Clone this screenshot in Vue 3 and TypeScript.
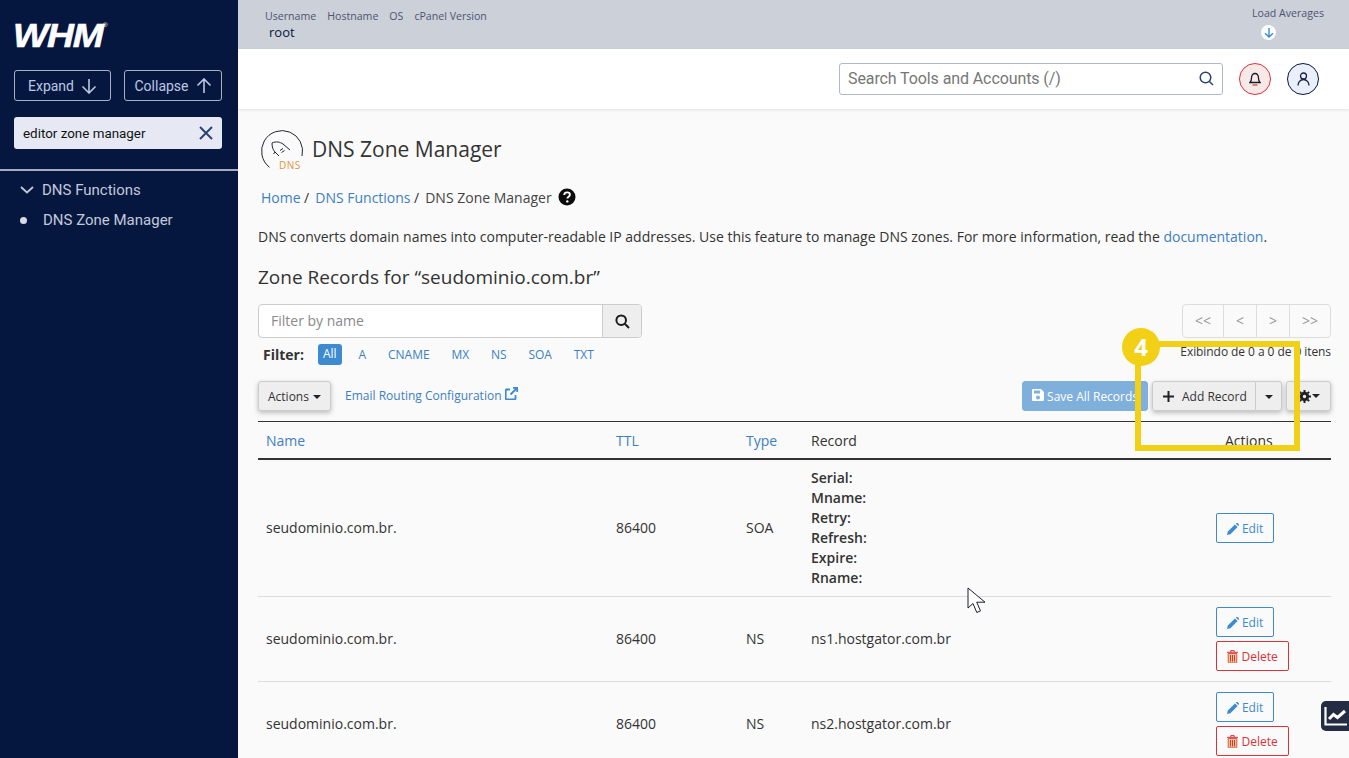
<script setup lang="ts">
interface ZoneRow {
  name: string;
  ttl: string;
  type: string;
  record: string[];
  canDelete: boolean;
}

const filterTypes = ["All", "A", "CNAME", "MX", "NS", "SOA", "TXT"];
const soaFields = ["Serial:", "Mname:", "Retry:", "Refresh:", "Expire:", "Rname:"];

const rows: ZoneRow[] = [
  { name: "seudominio.com.br.", ttl: "86400", type: "SOA", record: [], canDelete: false },
  { name: "seudominio.com.br.", ttl: "86400", type: "NS", record: ["ns1.hostgator.com.br"], canDelete: true },
  { name: "seudominio.com.br.", ttl: "86400", type: "NS", record: ["ns2.hostgator.com.br"], canDelete: true },
];
</script>

<template>
  <div class="shell">
    <aside class="sidebar">
      <div class="logo">WHM<sup>®</sup></div>
      <div class="side-buttons">
        <button class="side-btn">
          Expand
          <svg width="16" height="16" viewBox="0 0 16 16" fill="none" stroke="currentColor" stroke-width="1.6">
            <path d="M8 1v14M1.5 8.5 8 15l6.500-6.500" />
          </svg>
        </button>
        <button class="side-btn">
          Collapse
          <svg width="16" height="16" viewBox="0 0 16 16" fill="none" stroke="currentColor" stroke-width="1.6">
            <path d="M8 15V1M1.500 7.500 8 1l6.500 6.500" />
          </svg>
        </button>
      </div>
      <div class="side-search">
        <span>editor zone manager</span>
        <svg width="14" height="14" viewBox="0 0 14 14" fill="none" stroke="#2c4370" stroke-width="2">
          <path d="M1 1l12 12M13 1 1 13" />
        </svg>
      </div>
      <hr class="side-rule" />
      <div class="side-group">
        <svg width="14" height="8" viewBox="0 0 14 8" fill="none" stroke="currentColor" stroke-width="1.800">
          <path d="M1 1l6 5.500L13 1" />
        </svg>
        DNS Functions
      </div>
      <div class="side-item"><i class="dot"></i>DNS Zone Manager</div>
    </aside>

    <div class="main">
      <div class="topbar">
        <div>
          <div class="top-labels">
            <span>Username</span><span>Hostname</span><span>OS</span><span>cPanel Version</span>
          </div>
          <div class="top-user">root</div>
        </div>
        <div class="load">
          <div>Load Averages</div>
          <span class="load-arrow">
            <svg width="10" height="10" viewBox="0 0 10 10" fill="none" stroke="#3a8ad6" stroke-width="1.400">
              <path d="M5 0v9M1 5.200 5 9l4-3.800" />
            </svg>
          </span>
        </div>
      </div>

      <header class="header">
        <div class="search">
          <span>Search Tools and Accounts (/)</span>
          <svg width="15" height="15" viewBox="0 0 15 15" fill="none" stroke="#2c4370" stroke-width="1.500">
            <circle cx="6.500" cy="6.500" r="5.300" />
            <path d="M10.500 10.500 14 14" />
          </svg>
        </div>
        <div class="round bell">
          <svg width="12" height="14" viewBox="0 0 12 14" fill="none" stroke="#141b33" stroke-width="1.300">
            <path d="M1 10.500h10c-1.200-1.200-1.500-2.500-1.500-4.500C9.500 3 8 1.500 6 1.500S2.500 3 2.500 6c0 2-.3 3.300-1.500 4.500Z" />
            <path d="M3.500 13h5" stroke="#c2552d" />
          </svg>
        </div>
        <div class="round user">
          <svg width="13" height="14" viewBox="0 0 13 14" fill="none" stroke="#1a2340" stroke-width="1.300">
            <circle cx="6.500" cy="4" r="3" />
            <path d="M1 13.500c0-3 2.200-6 5.500-6s5.500 3 5.500 6" />
          </svg>
        </div>
      </header>

      <main class="content">
        <div class="title-row">
          <svg class="dns-icon" width="44" height="44" viewBox="0 0 44 44" fill="none">
            <path d="M9.500 38.300A20.500 20.500 0 1 1 42 27" stroke="#20242e" stroke-width="1" />
            <path d="M12 14c4-2 8-1 11 1l7 6M12 14c0 4 1 7 3 9l4 4M15 23l-1.500 2M20 21.500l3-2M21.500 23.500l3-2" stroke="#20242e" stroke-width="1" />
            <text x="19" y="39.500" class="dns-label">DNS</text>
          </svg>
          <h1>DNS Zone Manager</h1>
        </div>

        <nav class="crumbs">
          <a>Home</a><span class="sep">/</span><a>DNS Functions</a><span class="sep">/</span>
          <span class="current">DNS Zone Manager</span>
          <svg width="18" height="18" viewBox="0 0 18 18">
            <circle cx="9" cy="9" r="8.500" fill="#0c0c0c" />
            <path d="M6.200 7c.1-1.700 1.300-2.600 2.900-2.600s2.800 1 2.800 2.300c0 2-2.500 2-2.500 3.700" fill="none" stroke="#fff" stroke-width="1.900" />
            <circle cx="9.300" cy="13.400" r="1.200" fill="#fff" />
          </svg>
        </nav>

        <p class="intro">
          DNS converts domain names into computer-readable IP addresses. Use this feature to manage DNS zones. For more information, read the <a>documentation</a>.
        </p>

        <h2>Zone Records for “seudominio.com.br”</h2>

        <div class="filter-area">
          <div>
            <div class="filter-input">
              <span class="filter-text">Filter by name</span>
              <span class="filter-btn">
                <svg width="15" height="15" viewBox="0 0 15 15" fill="none" stroke="#1c1c1c" stroke-width="2">
                  <circle cx="6.200" cy="6.200" r="4.800" />
                  <path d="M9.800 9.800 14 14" />
                </svg>
              </span>
            </div>
            <div class="type-filter">
              <b>Filter:</b>
              <span v-for="t in filterTypes" :key="t" class="chip" :class="{ active: t === 'All' }">{{ t }}</span>
            </div>
          </div>
          <div class="paging">
            <div class="pager">
              <span>&lt;&lt;</span><span>&lt;</span><span>&gt;</span><span>&gt;&gt;</span>
            </div>
            <div class="paging-text">Exibindo de 0 a 0 de 0 itens</div>
          </div>
        </div>

        <div class="toolbar">
          <button class="btn raised">Actions <i class="caret"></i></button>
          <a class="email-link">
            Email Routing Configuration
            <svg width="13" height="13" viewBox="0 0 13 13" fill="none" stroke="#3d8ad0" stroke-width="1.800">
              <path d="M10.500 8v3.500a.8.8 0 0 1-.8.8H1.500a.8.8 0 0 1-.8-.8V3.300a.8.8 0 0 1 .8-.8H5" />
              <path d="M5.500 7.500 12 1M8 .800h4.200V5" />
            </svg>
          </a>
          <div class="toolbar-right">
            <button class="btn save">
              <svg width="12" height="12" viewBox="0 0 12 12">
                <path fill="#fff" fill-rule="evenodd" d="M1 0h8l3 3v8a1 1 0 0 1-1 1H1a1 1 0 0 1-1-1V1a1 1 0 0 1 1-1Zm1 1.500V4.500h6V1.500H2ZM6 6.500a2 2 0 1 0 0 4 2 2 0 0 0 0-4Z" />
              </svg>
              Save All Records
            </button>
            <div class="split raised">
              <button class="btn add">
                <svg width="11" height="11" viewBox="0 0 11 11" fill="none" stroke="#222" stroke-width="2">
                  <path d="M5.500 0v11M0 5.500h11" />
                </svg>
                Add Record
              </button>
              <button class="btn add-caret"><i class="caret"></i></button>
            </div>
            <button class="btn raised gear">
              <svg width="13" height="13" viewBox="0 0 13 13" fill="none" stroke="#222" stroke-width="3">
                <circle cx="6.500" cy="6.500" r="3.200" />
                <path stroke-width="2" d="M6.500 0v2M6.500 11v2M0 6.500h2M11 6.500h2M1.900 1.900l1.400 1.400M9.700 9.700l1.400 1.400M1.900 11.100l1.400-1.400M9.700 3.300l1.400-1.400" />
              </svg>
              <i class="caret"></i>
            </button>
          </div>
        </div>

        <table class="records">
          <colgroup>
            <col style="width: 350px" /><col style="width: 130px" /><col style="width: 65px" /><col style="width: 405px" /><col style="width: 123px" />
          </colgroup>
          <thead>
            <tr>
              <th><a>Name</a></th>
              <th><a>TTL</a></th>
              <th><a>Type</a></th>
              <th>Record</th>
              <th class="actions-head">Actions</th>
            </tr>
          </thead>
          <tbody>
            <tr v-for="(row, i) in rows" :key="i">
              <td>{{ row.name }}</td>
              <td>{{ row.ttl }}</td>
              <td>{{ row.type }}</td>
              <td :class="{ 'soa-cell': row.type === 'SOA' }">
                <template v-if="row.type === 'SOA'">
                  <div v-for="f in soaFields" :key="f" class="soa-line">{{ f }}</div>
                </template>
                <template v-else>{{ row.record[0] }}</template>
              </td>
              <td class="row-actions">
                <button class="row-btn edit">
                  <svg width="12" height="12" viewBox="0 0 12 12" fill="#3d8ad0">
                    <path d="M0 12l.8-3.400L8 1.400 10.600 4 3.400 11.200 0 12ZM8.800.6l.6-.5a.9.900 0 0 1 1.200 0l1.200 1.200a.9.900 0 0 1 0 1.200l-.5.6L8.800.6Z" />
                  </svg>
                  Edit
                </button>
                <button v-if="row.canDelete" class="row-btn del">
                  <svg width="11" height="13" viewBox="0 0 11 13">
                    <path d="M1.200 3.500h8.600V12a1 1 0 0 1-1 1H2.200a1 1 0 0 1-1-1V3.500Z" fill="#e8c98a" stroke="#d6333b" stroke-width="0.800" />
                    <path d="M3.500 5v6.500M5.500 5v6.500M7.500 5v6.500M0 2.300h11M3.800 2V.6h3.400V2" fill="none" stroke="#d6333b" stroke-width="1" />
                  </svg>
                  Delete
                </button>
              </td>
            </tr>
          </tbody>
        </table>
      </main>
    </div>

    <div class="callout-box"></div>
    <div class="callout-badge">4</div>

    <svg class="pointer" width="20" height="28" viewBox="0 0 20 28">
      <path d="M1 1v20l5-4.500 3.800 9 3.700-1.600-3.800-8.700H18L1 1Z" fill="#fff" stroke="#1b1f2e" stroke-width="1" />
    </svg>

    <div class="chart-tab">
      <svg width="23" height="21" viewBox="0 0 23 21" fill="none" stroke="#fff" stroke-width="2.200">
        <path d="M1.500 1v17.500H23" />
        <path d="M5 13l4.500-4.500 4 3L21 5" stroke-width="3" />
      </svg>
    </div>
  </div>
</template>

<style>
html,
body {
  margin: 0;
  height: 758px;
  overflow: hidden;
}
</style>

<style scoped>
.shell {
  position: relative;
  display: grid;
  grid-template-columns: 238px 1fr;
  height: 758px;
  overflow: hidden;
  font-family: "Open Sans", sans-serif;
  font-size: 14px;
  color: #333;
  background: #fafafa;
}

.sidebar {
  background: #06173f;
  color: #c3c9dc;
  font-family: Roboto, sans-serif;
}

.logo {
  height: 25px;
  margin: 22px 0 0 13px;
  color: #fff;
  font-family: "Liberation Sans", sans-serif;
  font-size: 33px;
  line-height: 27px;
  font-style: italic;
  font-weight: 700;
  letter-spacing: -1px;
  -webkit-text-stroke: 0.6px #fff;
  transform: scaleX(1.13);
  transform-origin: left;
}

.logo sup {
  font-size: 6px;
  line-height: 0;
  vertical-align: 20px;
  font-style: normal;
  font-weight: 400;
  letter-spacing: 0;
  -webkit-text-stroke: 0;
}

.side-buttons {
  display: flex;
  gap: 13px;
  margin: 23px 16px 0 14px;
}

.side-btn {
  width: 97px;
  height: 31px;
  display: flex;
  align-items: center;
  justify-content: center;
  gap: 7px;
  padding: 0;
  border: 1px solid #a9b0c6;
  border-radius: 3px;
  background: none;
  color: #bcc7e2;
  font-family: Roboto, sans-serif;
  font-size: 14px;
}

.side-btn + .side-btn {
  width: 98px;
}

.side-search {
  display: flex;
  align-items: center;
  justify-content: space-between;
  height: 32px;
  margin: 16px 16px 0 14px;
  padding: 0 9px;
  border-radius: 3px;
  background: #e6e9f3;
  color: #111;
  font-size: 13.4px;
}

.side-rule {
  margin: 20px 0 0;
  border: 0;
  height: 2px;
  background: #a5abbf;
}

.side-group {
  display: flex;
  align-items: center;
  gap: 8px;
  margin: 9px 0 0 20px;
  height: 20px;
  font-size: 15px;
}

.side-item {
  display: flex;
  align-items: center;
  margin: 10px 0 0 20px;
  height: 20px;
  font-size: 15px;
}

.dot {
  width: 7px;
  height: 7px;
  margin-right: 16px;
  border-radius: 50%;
  background: #d8dbe6;
}

.main {
  min-width: 0;
}

.topbar {
  display: flex;
  justify-content: space-between;
  height: 49px;
  padding: 9px 25px 0 27px;
  box-sizing: border-box;
  background: #ccd0d9;
  color: #4c5470;
  font-size: 10.6px;
}

.top-labels {
  display: flex;
  gap: 11px;
  line-height: 15px;
}

.top-user {
  margin: -1px 0 0 4px;
  font-size: 13px;
  line-height: 18px;
  color: #06173f;
}

.load {
  margin-top: -1px;
  line-height: 10px;
}

.load-arrow {
  display: flex;
  align-items: center;
  justify-content: center;
  width: 15px;
  height: 15px;
  margin: 7px 0 0 9px;
  border-radius: 50%;
  background: #fff;
}

.header {
  position: relative;
  display: flex;
  align-items: center;
  justify-content: flex-end;
  gap: 16px;
  height: 60px;
  padding-right: 30px;
  background: #fff;
  box-shadow: 0 1px 3px rgba(0, 0, 0, 0.1);
}

.search {
  display: flex;
  align-items: center;
  justify-content: space-between;
  width: 384px;
  height: 32px;
  padding: 0 8px 2px;
  box-sizing: border-box;
  border: 1px solid #aeb8cf;
  border-radius: 3px;
  color: #777;
  font-family: Roboto, sans-serif;
  font-size: 16px;
  letter-spacing: -0.1px;
}

.round {
  display: flex;
  align-items: center;
  justify-content: center;
  width: 32px;
  height: 32px;
  box-sizing: border-box;
  border-radius: 50%;
}

.bell {
  border: 1px solid #d9333f;
  background: #f8e8e6;
}

.user {
  border: 1px solid #06173f;
  background: #ebeefb;
}

.content {
  padding: 20px 18px 0 20px;
}

.title-row {
  display: flex;
  align-items: center;
  gap: 8px;
  height: 44px;
  margin-left: 2px;
}

.dns-label {
  fill: #dc9440;
  font-family: "Open Sans", sans-serif;
  font-size: 10px;
  letter-spacing: 0.5px;
}

.title-row h1 {
  margin: 0;
  padding-bottom: 4px;
  color: #333;
  font-size: 21px;
  font-weight: 400;
}

.crumbs {
  display: flex;
  align-items: center;
  height: 20px;
  margin: 14px 0 0 3px;
}

.crumbs .sep {
  margin: 0 6px 0 3.500px;
}

.current {
  margin-right: 6px;
  color: #444;
}

a {
  color: #3d7fc0;
}

.intro {
  margin: 20px 0 0;
  line-height: 20px;
}

h2 {
  margin: 18px 0 0;
  font-size: 19px;
  font-weight: 400;
  line-height: 24px;
  color: #333;
}

.filter-area {
  display: flex;
  justify-content: space-between;
  margin-top: 15px;
}

.filter-input {
  display: flex;
  width: 384px;
  height: 34px;
  box-sizing: border-box;
  border: 1px solid #ccc;
  border-radius: 4px;
  background: #fff;
}

.filter-text {
  flex: 1;
  padding-left: 12px;
  color: #8a8a8a;
  line-height: 32px;
}

.filter-btn {
  display: flex;
  align-items: center;
  justify-content: center;
  width: 38px;
  border-left: 1px solid #ccc;
  border-radius: 0 3px 3px 0;
  background: #eee;
}

.type-filter {
  display: flex;
  align-items: center;
  height: 22px;
  margin-top: 5px;
  font-size: 12px;
}

.type-filter b {
  margin: 0 14px 0 5px;
  font-size: 14px;
}

.chip {
  margin-right: 21.800px;
  padding-top: 1px;
  color: #3d7fc0;
  line-height: 20px;
}

.chip.active {
  margin-right: 17px;
  padding: 0 5px 1px;
  border-radius: 3px;
  background: #3d8ad0;
  color: #fff;
}

.paging {
  text-align: right;
}

.pager {
  display: inline-flex;
  height: 34px;
  box-sizing: border-box;
  border: 1px solid #ddd;
  border-radius: 4px;
  color: #999;
  line-height: 32px;
  font-size: 14px;
}

.pager span {
  width: 33px;
  box-sizing: border-box;
  text-align: center;
  border-left: 1px solid #ddd;
}

.pager span:first-child {
  width: 40px;
  border-left: 0;
}

.pager span:last-child {
  width: 41px;
}

.paging-text {
  margin-top: 5px;
  font-size: 12px;
  line-height: 17px;
  letter-spacing: -0.07px;
}

.toolbar {
  display: flex;
  align-items: center;
  height: 30px;
  margin-top: 16px;
}

.btn {
  height: 30px;
  padding: 0 9px;
  border: 1px solid #ccc;
  border-radius: 3px;
  background: #eee;
  color: #333;
  font-family: "Open Sans", sans-serif;
  font-size: 12px;
  white-space: nowrap;
}

.raised {
  box-shadow: 0 2px 5px rgba(0, 0, 0, 0.25);
}

.caret {
  display: inline-block;
  margin-left: 1px;
  vertical-align: middle;
  border-top: 4px solid #222;
  border-left: 4px solid transparent;
  border-right: 4px solid transparent;
}

.email-link {
  margin-left: 14px;
  margin-top: -2px;
  font-size: 12px;
  color: #3d7fc0;
}

.toolbar-right {
  display: flex;
  margin-left: auto;
}

.save {
  width: 126px;
  padding: 0 0 0 9px;
  border-color: #7fb0dc;
  background: #7fb0dc;
  color: #fff;
  text-align: left;
  overflow: hidden;
}

.split {
  display: flex;
  margin-left: 4px;
  border-radius: 3px;
}

.add {
  display: flex;
  align-items: center;
  gap: 8px;
  width: 104px;
  padding: 0 0 0 10px;
  border-radius: 3px 0 0 3px;
}

.add-caret {
  width: 26px;
  padding: 0;
  border-left: 0;
  border-radius: 0 3px 3px 0;
}

.gear {
  display: flex;
  align-items: center;
  width: 45px;
  margin-left: 4px;
  padding: 0 0 0 11px;
}

.records {
  width: 1073px;
  margin-top: 10px;
  border-collapse: collapse;
  table-layout: fixed;
  border-top: 1px solid #333;
}

.records th {
  height: 36px;
  padding: 0 8px;
  text-align: left;
  font-weight: 400;
  border-bottom: 2px solid #333;
}

.records .actions-head {
  padding-left: 17px;
}

.records td {
  padding: 7px 8px 9px;
  vertical-align: middle;
  border-bottom: 1px solid #ddd;
}

.records .soa-cell {
  padding: 8px;
}

.records .row-actions {
  padding: 10px 8px;
}

.soa-line {
  font-weight: 600;
  line-height: 20px;
}

.row-btn {
  display: block;
  height: 30px;
  padding: 0;
  border-radius: 2px;
  background: transparent;
  font-family: "Open Sans", sans-serif;
  font-size: 12px;
  white-space: nowrap;
}

.row-btn svg {
  vertical-align: -2px;
}

.edit {
  width: 58px;
  border: 1px solid #3d8ad0;
  color: #3d8ad0;
}

.del {
  width: 73px;
  margin-top: 4px;
  border: 1px solid #d6333b;
  color: #d6333b;
}

.callout-box {
  position: absolute;
  left: 1135px;
  top: 341px;
  width: 165px;
  height: 110px;
  box-sizing: border-box;
  border: 6px solid #f2d015;
}

.callout-badge {
  position: absolute;
  left: 1122px;
  top: 328px;
  width: 38px;
  height: 38px;
  border-radius: 50%;
  background: #f2d015;
  color: #fff;
  font-family: "Open Sans", sans-serif;
  font-size: 24px;
  font-weight: 700;
  line-height: 38px;
  text-align: center;
}

.pointer {
  position: absolute;
  left: 967px;
  top: 587px;
}

.chart-tab {
  position: absolute;
  right: 0;
  top: 701px;
  display: flex;
  align-items: center;
  justify-content: center;
  width: 28px;
  height: 30px;
  border-radius: 5px 0 0 5px;
  background: #232c42;
}
</style>
